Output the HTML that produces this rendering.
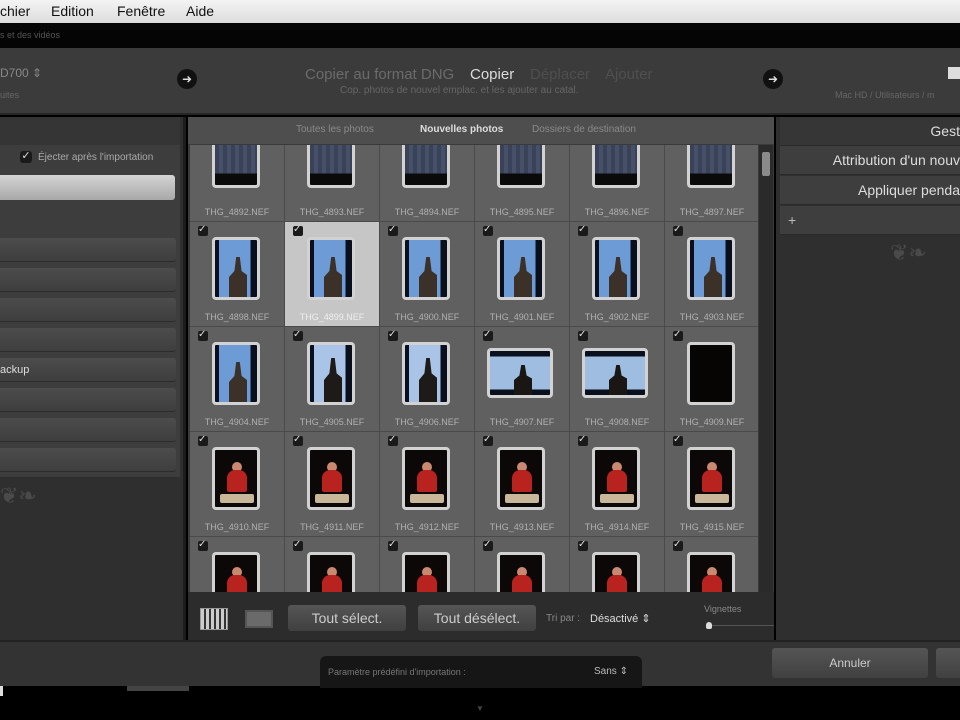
<!DOCTYPE html>
<html><head><meta charset="utf-8"><style>
*{margin:0;padding:0;box-sizing:border-box}
body{width:960px;height:720px;overflow:hidden;background:#000;font-family:"Liberation Sans",sans-serif;position:relative}
.a{position:absolute}
.menu{left:0;top:0;width:960px;height:23px;background:linear-gradient(#f4f4f4,#dcdcdc);font-size:14px;color:#111}
.menu span{position:absolute;top:3px}
.blk{left:0;top:23px;width:960px;height:25px;background:#050505}
.hdr{left:0;top:48px;width:960px;height:67px;background:#3b3b3b;border-bottom:2px solid #262626}
.arrow{width:20px;height:20px;border-radius:50%;background:#111;color:#ddd;font-size:12px;text-align:center;line-height:20px}
.lp{left:0;top:117px;width:186px;height:523px;background:#2f2f2f;border-right:3px solid #1c1c1c}
.lbox{left:0;top:145px;width:180px;height:332px;background:#3d3d3d}
.btn{left:0;width:176px;height:24px;background:linear-gradient(#4c4c4c,#3e3e3e);border-radius:0 3px 3px 0;border-bottom:1px solid #2c2c2c}
.gridbg{left:188px;top:117px;width:586px;height:523px;background:#3a3a3a}
.tabs{left:188px;top:117px;width:586px;height:27px;background:#4e4e4e;font-size:10px;color:#8a8a8a}
.grid{left:190px;top:145px;width:568px;height:447px;overflow:hidden;background:#4a4a4a}
.c{position:absolute;width:94px;height:104px;background:#606060}
.c.s{background:#c6c6c6}
.ck{position:absolute;left:8px;top:4px;width:10px;height:10px;background:#1a1a1a;border-radius:2px;color:#ddd;font-size:10px;line-height:8px}
.f{position:absolute;border:3px solid #d2d2d2;border-radius:4px;background:#111;overflow:hidden}
.p{left:22px;top:15px;width:48px;height:63px}
.l{left:12px;top:21px;width:66px;height:50px}
.lab{position:absolute;left:0;width:94px;top:90px;text-align:center;font-size:9px;color:#b0b0b0}
.sky{background:linear-gradient(90deg,#0a0f1e 0 10%,#6d9bd6 10% 85%,#0a0f1e 85%)}
.dsky{background:linear-gradient(90deg,#0a0f1e 0 10%,#a9c4e6 10% 85%,#0a0f1e 85%)}
.tw{position:absolute;left:14px;bottom:0;width:18px;height:40px;background:#3b3128;clip-path:polygon(40% 0,60% 0,70% 35%,100% 45%,100% 100%,0 100%,0 50%,30% 35%)}
.dk{background:linear-gradient(transparent 80%,#0a0a0a 80%),repeating-linear-gradient(90deg,#3a4258 0 4px,#465068 4px 8px)}
.red{background:#0b0807}
.red i{position:absolute;left:12px;top:20px;width:20px;height:22px;background:#b8221f;border-radius:8px 8px 2px 2px}
.red b{position:absolute;left:17px;top:12px;width:10px;height:10px;background:#c98870;border-radius:50%}
.red u{position:absolute;left:5px;bottom:4px;width:34px;height:9px;background:#c9b79a;border-radius:2px}
.bbar{left:188px;top:592px;width:586px;height:48px;background:#2c2c2c}
.gb{height:26px;background:linear-gradient(#555,#404040);border-radius:3px;color:#ccc;font-size:14px;text-align:center;line-height:26px}
.rp{left:776px;top:117px;width:184px;height:523px;background:#2f2f2f}
.rr{left:780px;width:180px;height:29px;background:#3e3e3e;color:#ddd;font-size:14px;text-align:right;padding-top:6px;border-bottom:1px solid #2a2a2a;white-space:nowrap;overflow:hidden}
.foot{left:0;top:640px;width:960px;height:46px;background:#333;border-top:2px solid #222}
</style></head><body>
<div class="a menu"><span style="left:0">chier</span><span style="left:51px">Edition</span><span style="left:117px">Fenêtre</span><span style="left:186px">Aide</span></div>
<div class="a blk"><span class="a" style="left:0;top:7px;font-size:9px;color:#555">s et des vidéos</span></div>
<div class="a hdr">
<span class="a" style="left:0;top:18px;font-size:12px;color:#888">D700 ⇕</span>
<span class="a" style="left:0;top:42px;font-size:9px;color:#666">uites</span>
<div class="a arrow" style="left:177px;top:21px">➜</div>
<span class="a" style="left:305px;top:18px;font-size:15px;color:#6b6b6b">Copier au format DNG</span>
<span class="a" style="left:470px;top:18px;font-size:15px;color:#dcdcdc">Copier</span>
<span class="a" style="left:530px;top:18px;font-size:15px;color:#4f4f4f">Déplacer</span>
<span class="a" style="left:605px;top:18px;font-size:15px;color:#4f4f4f">Ajouter</span>
<span class="a" style="left:340px;top:37px;font-size:10px;color:#666">Cop. photos de nouvel emplac. et les ajouter au catal.</span>
<div class="a arrow" style="left:763px;top:21px">➜</div>
<div class="a" style="left:948px;top:19px;width:12px;height:12px;background:#ddd"></div>
<span class="a" style="left:835px;top:42px;font-size:9px;color:#666;white-space:nowrap">Mac HD / Utilisateurs / m</span>
</div>
<div class="a lp"></div>
<div class="a" style="left:0;top:117px;width:180px;height:28px;background:#353535"></div>
<div class="a lbox"></div>
<span class="a" style="left:20px;top:151px;width:12px;height:12px;background:#1a1a1a;border-radius:3px;color:#ddd;font-size:11px;line-height:11px;text-align:center">✓</span>
<span class="a" style="left:38px;top:152px;font-size:10px;color:#aaa">Éjecter après l'importation</span>
<div class="a" style="left:0;top:175px;width:175px;height:25px;background:linear-gradient(#d4d4d4,#a8a8a8);border-radius:0 3px 3px 0"></div>
<div class="a btn" style="top:238px"></div><div class="a btn" style="top:268px"></div><div class="a btn" style="top:298px"></div><div class="a btn" style="top:328px"></div>
<div class="a btn" style="top:358px;color:#ddd;font-size:11px;padding-top:6px">ackup</div>
<div class="a btn" style="top:388px"></div><div class="a btn" style="top:418px"></div><div class="a btn" style="top:448px"></div>
<span class="a" style="left:0;top:483px;font-size:22px;color:#4a4a4a">❦❧</span>
<div class="a gridbg"></div>
<div class="a tabs"><span class="a" style="left:108px;top:7px">Toutes les photos</span><span class="a" style="left:232px;top:7px;color:#ddd;font-weight:bold">Nouvelles photos</span><span class="a" style="left:344px;top:7px">Dossiers de destination</span></div>
<div class="a grid">
<div class="c" style="left:0;top:-28px"><div class="f p dk" style="top:8px"></div><div class="lab">THG_4892.NEF</div></div>
<div class="c" style="left:95px;top:-28px"><div class="f p dk" style="top:8px"></div><div class="lab">THG_4893.NEF</div></div>
<div class="c" style="left:190px;top:-28px"><div class="f p dk" style="top:8px"></div><div class="lab">THG_4894.NEF</div></div>
<div class="c" style="left:285px;top:-28px"><div class="f p dk" style="top:8px"></div><div class="lab">THG_4895.NEF</div></div>
<div class="c" style="left:380px;top:-28px"><div class="f p dk" style="top:8px"></div><div class="lab">THG_4896.NEF</div></div>
<div class="c" style="left:475px;top:-28px"><div class="f p dk" style="top:8px"></div><div class="lab">THG_4897.NEF</div></div>
<div class="c" style="left:0;top:77px"><div class="ck">✓</div><div class="f p sky"><div class="tw"></div></div><div class="lab">THG_4898.NEF</div></div>
<div class="c s" style="left:95px;top:77px"><div class="ck">✓</div><div class="f p sky"><div class="tw"></div></div><div class="lab" style="color:#eee">THG_4899.NEF</div></div>
<div class="c" style="left:190px;top:77px"><div class="ck">✓</div><div class="f p sky"><div class="tw"></div></div><div class="lab">THG_4900.NEF</div></div>
<div class="c" style="left:285px;top:77px"><div class="ck">✓</div><div class="f p sky"><div class="tw"></div></div><div class="lab">THG_4901.NEF</div></div>
<div class="c" style="left:380px;top:77px"><div class="ck">✓</div><div class="f p sky"><div class="tw"></div></div><div class="lab">THG_4902.NEF</div></div>
<div class="c" style="left:475px;top:77px"><div class="ck">✓</div><div class="f p sky"><div class="tw"></div></div><div class="lab">THG_4903.NEF</div></div>
<div class="c" style="left:0;top:182px"><div class="ck">✓</div><div class="f p sky"><div class="tw"></div></div><div class="lab">THG_4904.NEF</div></div>
<div class="c" style="left:95px;top:182px"><div class="ck">✓</div><div class="f p dsky"><div class="tw" style="background:#1e1a18;height:44px"></div></div><div class="lab">THG_4905.NEF</div></div>
<div class="c" style="left:190px;top:182px"><div class="ck">✓</div><div class="f p dsky"><div class="tw" style="background:#1e1a18;height:44px"></div></div><div class="lab">THG_4906.NEF</div></div>
<div class="c" style="left:285px;top:182px"><div class="ck">✓</div><div class="f l" style="background:linear-gradient(#0a0f1e 0 12%,#9ebde0 12% 88%,#0a0f1e 88%)"><div class="tw" style="left:24px;background:#1a1614;height:30px"></div></div><div class="lab">THG_4907.NEF</div></div>
<div class="c" style="left:380px;top:182px"><div class="ck">✓</div><div class="f l" style="background:linear-gradient(#0a0f1e 0 12%,#9ebde0 12% 88%,#0a0f1e 88%)"><div class="tw" style="left:24px;background:#1a1614;height:30px"></div></div><div class="lab">THG_4908.NEF</div></div>
<div class="c" style="left:475px;top:182px"><div class="ck">✓</div><div class="f p" style="background:#060504"></div><div class="lab">THG_4909.NEF</div></div>
<div class="c" style="left:0;top:287px"><div class="ck">✓</div><div class="f p red"><b></b><i></i><u></u></div><div class="lab">THG_4910.NEF</div></div>
<div class="c" style="left:95px;top:287px"><div class="ck">✓</div><div class="f p red"><b></b><i></i><u></u></div><div class="lab">THG_4911.NEF</div></div>
<div class="c" style="left:190px;top:287px"><div class="ck">✓</div><div class="f p red"><b></b><i></i><u></u></div><div class="lab">THG_4912.NEF</div></div>
<div class="c" style="left:285px;top:287px"><div class="ck">✓</div><div class="f p red"><b></b><i></i><u></u></div><div class="lab">THG_4913.NEF</div></div>
<div class="c" style="left:380px;top:287px"><div class="ck">✓</div><div class="f p red"><b></b><i></i><u></u></div><div class="lab">THG_4914.NEF</div></div>
<div class="c" style="left:475px;top:287px"><div class="ck">✓</div><div class="f p red"><b></b><i></i><u></u></div><div class="lab">THG_4915.NEF</div></div>
<div class="c" style="left:0;top:392px"><div class="ck">✓</div><div class="f p red"><b></b><i></i><u></u></div></div>
<div class="c" style="left:95px;top:392px"><div class="ck">✓</div><div class="f p red"><b></b><i></i><u></u></div></div>
<div class="c" style="left:190px;top:392px"><div class="ck">✓</div><div class="f p red"><b></b><i></i><u></u></div></div>
<div class="c" style="left:285px;top:392px"><div class="ck">✓</div><div class="f p red"><b></b><i></i><u></u></div></div>
<div class="c" style="left:380px;top:392px"><div class="ck">✓</div><div class="f p red"><b></b><i></i><u></u></div></div>
<div class="c" style="left:475px;top:392px"><div class="ck">✓</div><div class="f p red"><b></b><i></i><u></u></div></div>
</div>
<div class="a" style="left:759px;top:145px;width:14px;height:447px;background:#2a2a2a"></div>
<div class="a" style="left:762px;top:152px;width:8px;height:24px;background:#8a8a8a;border-radius:2px"></div>
<div class="a bbar">
<div class="a" style="left:12px;top:16px;width:28px;height:22px;background:repeating-linear-gradient(90deg,#ccc 0 3px,#333 3px 5px);border:1px solid #999"></div>
<div class="a" style="left:57px;top:18px;width:28px;height:18px;background:#6a6a6a;border:2px solid #555"></div>
<div class="a gb" style="left:100px;top:13px;width:118px">Tout sélect.</div>
<div class="a gb" style="left:230px;top:13px;width:118px">Tout désélect.</div>
<span class="a" style="left:358px;top:21px;font-size:10px;color:#888">Tri par :</span>
<span class="a" style="left:402px;top:20px;font-size:11px;color:#ddd">Désactivé ⇕</span>
<span class="a" style="left:516px;top:12px;font-size:9px;color:#888">Vignettes</span>
<div class="a" style="left:520px;top:33px;width:66px;height:1px;background:#555"></div>
<div class="a" style="left:518px;top:30px;width:6px;height:7px;background:#ddd;border-radius:3px 3px 2px 2px"></div>
</div>
<div class="a rp"></div>
<div class="a rr" style="top:117px;background:#363636">Gest</div>
<div class="a rr" style="top:146px">Attribution d'un nouv</div>
<div class="a rr" style="top:176px">Appliquer penda</div>
<div class="a rr" style="top:206px;text-align:left;padding-left:8px;color:#bbb">+</div>
<span class="a" style="left:890px;top:240px;font-size:22px;color:#4a4a4a">❦❧</span>
<div class="a foot">
<div class="a" style="left:320px;top:14px;width:322px;height:32px;background:#161616;border-radius:6px 6px 0 0"></div>
<span class="a" style="left:328px;top:25px;font-size:9px;color:#777">Paramètre prédéfini d'importation :</span>
<span class="a" style="left:594px;top:24px;font-size:10px;color:#bbb">Sans ⇕</span>
<div class="a gb" style="left:772px;top:6px;width:156px;height:30px;line-height:30px;font-size:12px">Annuler</div>
<div class="a gb" style="left:936px;top:6px;width:30px;height:30px"></div>
</div>
<div class="a" style="left:127px;top:686px;width:62px;height:5px;background:#444"></div>
<div class="a" style="left:0;top:686px;width:3px;height:10px;background:#ddd"></div>
<span class="a" style="left:476px;top:704px;font-size:8px;color:#444">▼</span>
</body></html>
